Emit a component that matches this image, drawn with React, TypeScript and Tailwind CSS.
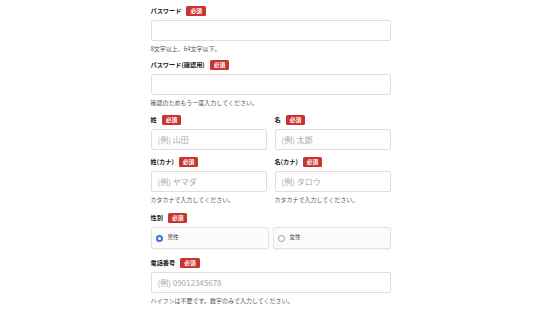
import { useState } from "react";

// small red "required" tag next to labels
function Required() {
  return (
    <span className="ml-[5px] inline-flex h-[10px] items-center rounded-[1.5px] bg-[#c9342f] px-[4px] text-[5.8px] font-bold leading-none text-white">
      必須
    </span>
  );
}

function Label({ text }: { text: string }) {
  return (
    <div className="mb-[4px] flex h-[10px] items-center text-[6.2px] font-bold leading-none text-[#222]">
      <span>{text}</span>
      <Required />
    </div>
  );
}

function TextInput({ placeholder = "", type = "text" }: { placeholder?: string; type?: string }) {
  return (
    <input
      type={type}
      placeholder={placeholder}
      className="block h-[21px] w-full rounded-[2px] border border-[#dedede] bg-white px-[6px] text-[8px] text-[#333] placeholder:text-[#a8a8a8] focus:outline-none"
    />
  );
}

function Help({ text }: { text: string }) {
  return <p className="mt-[3px] h-[9px] text-[6px] leading-[9px] text-[#555]">{text}</p>;
}

export default function App() {
  const [gender, setGender] = useState("male");

  return (
    <div
      className="min-h-screen bg-white"
      style={{ fontFamily: '"Noto Sans CJK JP", "Noto Sans", sans-serif' }}
    >
      <form className="mx-auto flex w-[240px] flex-col pt-[6px]">
        {/* password */}
        <div>
          <Label text="パスワード" />
          <TextInput type="password" />
          <Help text="8文字以上、64文字以下。" />
        </div>

        <div className="mt-[7px]">
          <Label text="パスワード(確認用)" />
          <TextInput type="password" />
          <Help text="確認のためもう一度入力してください。" />
        </div>

        {/* name */}
        <div className="mt-[8px] grid grid-cols-2 gap-x-[8px]">
          <div>
            <Label text="姓" />
            <TextInput placeholder="(例) 山田" />
          </div>
          <div>
            <Label text="名" />
            <TextInput placeholder="(例) 太郎" />
          </div>
        </div>

        <div className="mt-[7px] grid grid-cols-2 gap-x-[8px]">
          <div>
            <Label text="姓(カナ)" />
            <TextInput placeholder="(例) ヤマダ" />
            <Help text="カタカナで入力してください。" />
          </div>
          <div>
            <Label text="名(カナ)" />
            <TextInput placeholder="(例) タロウ" />
            <Help text="カタカナで入力してください。" />
          </div>
        </div>

        {/* gender */}
        <div className="mt-[9px]">
          <Label text="性別" />
          <div className="grid grid-cols-2 gap-x-[4px]">
            {[
              { key: "male", text: "男性" },
              { key: "female", text: "女性" },
            ].map((g) => (
              <label
                key={g.key}
                onClick={() => setGender(g.key)}
                className="flex h-[22px] cursor-pointer items-center rounded-[2px] border border-[#e3e3e3] bg-[#fbfbfc] pl-[4px] shadow-[0_1px_1px_rgba(0,0,0,0.04)]"
              >
                {gender === g.key ? (
                  <span className="h-[7px] w-[7px] rounded-full border-[2px] border-[#3c6fdc] bg-white" />
                ) : (
                  <span className="h-[7px] w-[7px] rounded-full border border-[#9a9a9a] bg-white" />
                )}
                <span className="ml-[5px] text-[5.5px] leading-none text-[#333]">{g.text}</span>
              </label>
            ))}
          </div>
        </div>

        {/* phone */}
        <div className="mt-[9px]">
          <Label text="電話番号" />
          <TextInput type="tel" placeholder="(例) 09012345678" />
          <Help text="ハイフンは不要です。数字のみで入力してください。" />
        </div>
      </form>
    </div>
  );
}
